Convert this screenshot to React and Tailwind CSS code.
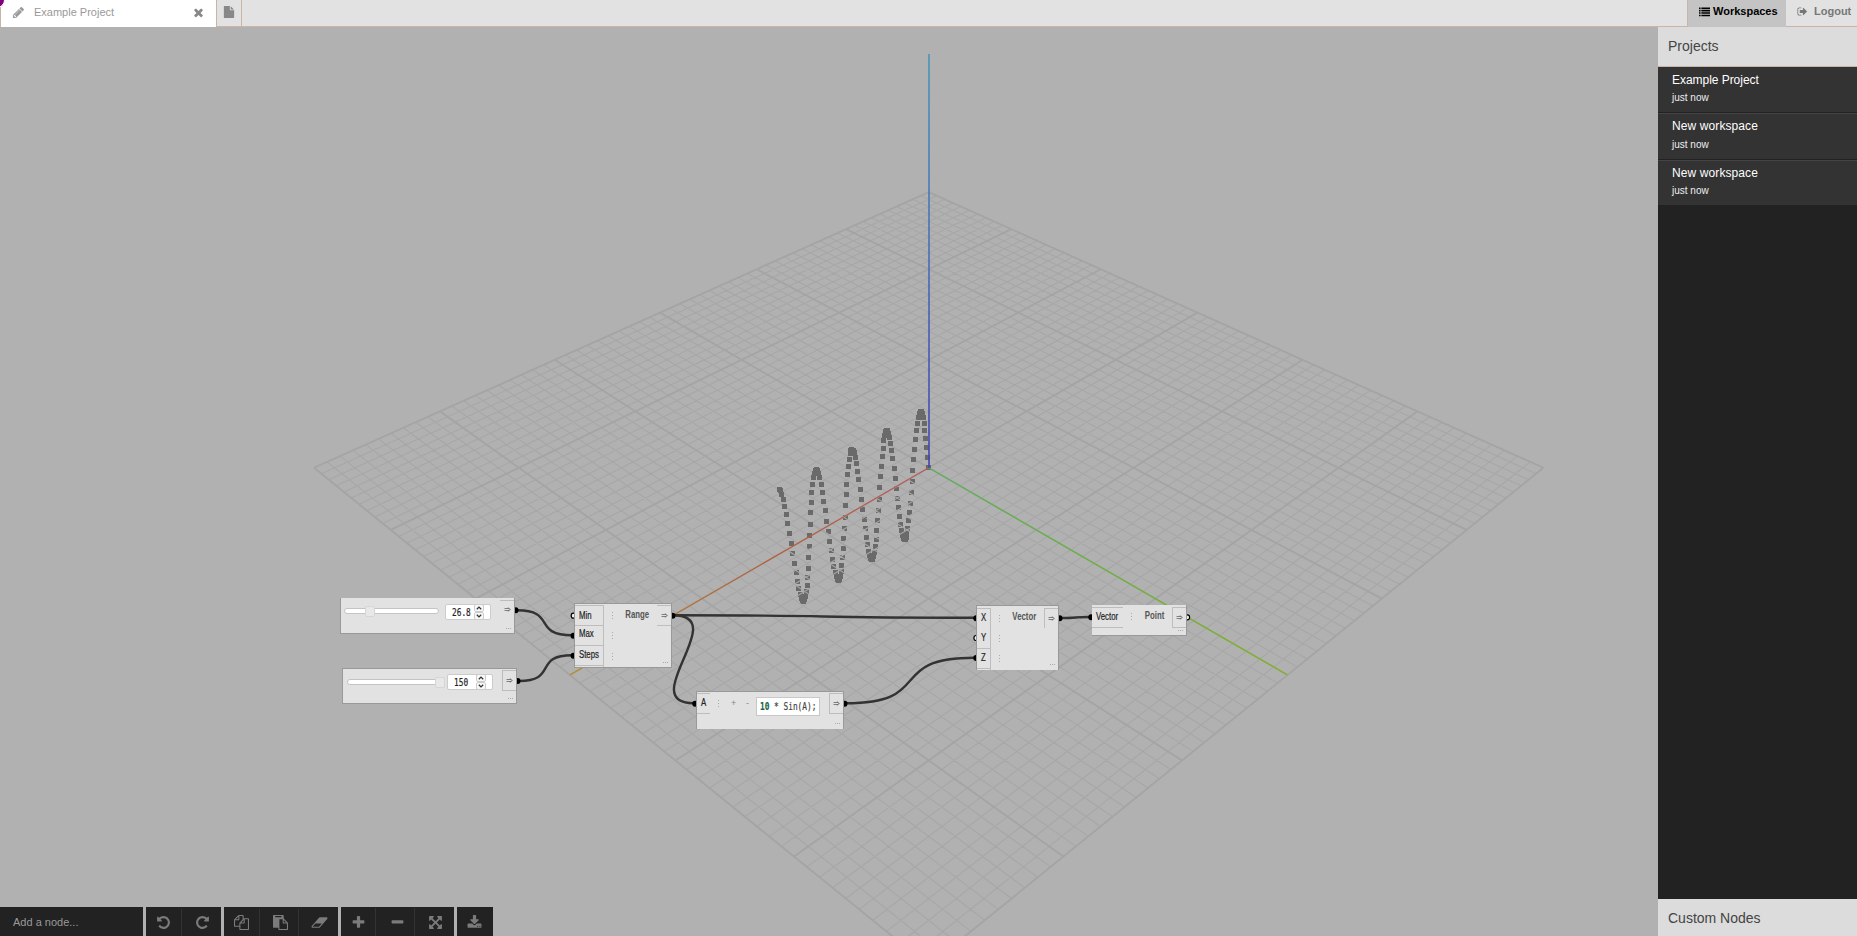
import React from "react";

/* ---------- icons (1792-unit grid) ---------- */
const ICONS = {
  undo: "M1664 896q0 156-61 298t-164 245-245 164-298 61q-172 0-327-72.5t-264-204.5q-7-10-6.5-22.5t8.5-20.5l137-138q10-9 25-9 16 2 23 12 73 95 179 147t225 52q104 0 198.5-40.5t163.5-109.5 109.5-163.5 40.5-198.5-40.5-198.5-109.5-163.5-163.5-109.5-198.5-40.5q-98 0-188 35.5t-160 101.5l137 138q31 30 14 69-17 40-59 40h-448q-26 0-45-19t-19-45v-448q0-42 40-59 39-17 69 14l130 129q107-101 244.5-156.5t284.5-55.5q156 0 298 61t245 164 164 245 61 298z",
  redo: "M1664 256v448q0 26-19 45t-45 19h-448q-42 0-59-40-17-39 14-69l138-138q-148-137-349-137-104 0-198.5 40.5t-163.5 109.5-109.5 163.5-40.5 198.5 40.5 198.5 109.5 163.5 163.5 109.5 198.5 40.5q119 0 225-52t179-147q7-10 23-12 15 0 25 9l137 138q9 8 9.5 20.5t-7.5 22.5q-109 132-264 204.5t-327 72.5q-156 0-298-61t-245-164-164-245-61-298 61-298 164-245 245-164 298-61q147 0 284.5 55.5t244.5 156.5l130-129q29-31 70-14 39 17 39 59z",
  copy: "M1696 384q40 0 68 28t28 68v1216q0 40-28 68t-68 28h-960q-40 0-68-28t-28-68v-288h-544q-40 0-68-28t-28-68v-672q0-40 20-88t48-76l408-408q28-28 76-48t88-20h416q40 0 68 28t28 68v328q68-40 128-40h416zm-544 213l-299 299h299v-299zm-640-384l-299 299h299v-299zm196 647l316-316v-416h-384v416q0 40-28 68t-68 28h-416v640h512v-256q0-40 20-88t48-76zm956 804v-1152h-384v416q0 40-28 68t-68 28h-416v640h896z",
  paste: "M768 1664h896v-640h-416q-40 0-68-28t-28-68v-416h-384v1152zm256-1440v-64q0-13-9.5-22.5t-22.5-9.5h-704q-13 0-22.5 9.5t-9.5 22.5v64q0 13 9.5 22.5t22.5 9.5h704q13 0 22.5-9.5t9.5-22.5zm256 672h299l-299-299v299zm512 128v672q0 40-28 68t-68 28h-960q-40 0-68-28t-28-68v-160h-544q-40 0-68-28t-28-68v-1344q0-40 28-68t68-28h1088q40 0 68 28t28 68v328q21 13 36 28l408 408q28 28 48 76t20 88z",
  eraser: "M960 1408l336-384h-768l-336 384h768zm1013-1077q15 34 9.5 71.5t-30.5 65.5l-896 1024q-38 44-96 44h-768q-38 0-69.5-20.5t-47.5-54.5q-15-34-9.5-71.5t30.5-65.5l896-1024q38-44 96-44h768q38 0 69.5 20.5t47.5 54.5z",
  plus: "M1600 736v192q0 40-28 68t-68 28h-416v416q0 40-28 68t-68 28h-192q-40 0-68-28t-28-68v-416h-416q-40 0-68-28t-28-68v-192q0-40 28-68t68-28h416v-416q0-40 28-68t68-28h192q40 0 68 28t28 68v416h416q40 0 68 28t28 68z",
  minus: "M1600 736v192q0 40-28 68t-68 28h-1216q-40 0-68-28t-28-68v-192q0-40 28-68t68-28h1216q40 0 68 28t28 68z",
  expand: "M1411 541l-355 355 355 355 144-144q29-31 70-14 39 17 39 59v448q0 26-19 45t-45 19h-448q-42 0-59-40-17-39 14-69l144-144-355-355-355 355 144 144q31 30 14 69-17 40-59 40h-448q-26 0-45-19t-19-45v-448q0-42 40-59 39-17 69 14l144 144 355-355-355-355-144 144q-19 19-45 19-12 0-24-5-40-17-40-59v-448q0-26 19-45t45-19h448q42 0 59 40 17 39-14 69l-144 144 355 355 355-355-144-144q-31-30-14-69 17-40 59-40h448q26 0 45 19t19 45v448q0 42-39 59-13 5-25 5-26 0-45-19z",
  download: "M1344 1344q0-26-19-45t-45-19-45 19-19 45 19 45 45 19 45-19 19-45zm256 0q0-26-19-45t-45-19-45 19-19 45 19 45 45 19 45-19 19-45zm128-224v320q0 40-28 68t-68 28h-1472q-40 0-68-28t-28-68v-320q0-40 28-68t68-28h465l135 136q58 56 136 56t136-56l136-136h464q40 0 68 28t28 68zm-325-569q17 41-14 70l-448 448q-18 19-45 19t-45-19l-448-448q-31-29-14-70 17-39 59-39h256v-448q0-26 19-45t45-19h256q26 0 45 19t19 45v448h256q42 0 59 39z",
  pencil: "M491 1536l91-91-235-235-91 91v107h128v128h107zm523-928q0-22-22-22-10 0-17 7l-542 542q-7 7-7 17 0 22 22 22 10 0 17-7l542-542q7-7 7-17zm-54-192l416 416-832 832h-416v-416zm683 96q0 53-37 90l-166 166-416-416 166-165q36-38 90-38 53 0 91 38l235 234q37 39 37 91z",
  times: "M1490 1322q0 40-28 68l-136 136q-28 28-68 28t-68-28l-294-294-294 294q-28 28-68 28t-68-28l-136-136q-28-28-28-68t28-68l294-294-294-294q-28-28-28-68t28-68l136-136q28-28 68-28t68 28l294 294 294-294q28-28 68-28t68 28l136 136q28 28 28 68t-28 68l-294 294 294 294q28 28 28 68z",
  file: "M1152 512v-472q22 14 36 28l408 408q14 14 28 36h-472zm-128 32q0 40 28 68t68 28h544v1056q0 40-28 68t-68 28h-1344q-40 0-68-28t-28-68v-1600q0-40 28-68t68-28h800v544z",
  list: "M0 256h256v256H0zM384 256h1408v256H384zM0 640h256v256H0zM384 640h1408v256H384zM0 1024h256v256H0zM384 1024h1408v256H384zM0 1408h256v256H0zM384 1408h1408v256H384z",
  signout: "M704 1440q0 4 1 20t.5 26.5-3 23.5-10 19.5-20.5 6.5h-320q-119 0-203.5-84.5t-84.5-203.5v-704q0-119 84.5-203.5t203.5-84.5h320q13 0 22.5 9.5t9.5 22.5q0 4 1 20t.5 26.5-3 23.5-10 19.5-20.5 6.5h-320q-66 0-113 47t-47 113v704q0 66 47 113t113 47h312l11.5 1 11.5 3 8 5.5 7 9 2 13.5zm928-544q0 26-19 45l-544 544q-19 19-45 19t-45-19-19-45v-288h-448q-26 0-45-19t-19-45v-384q0-26 19-45t45-19h448v-288q0-26 19-45t45-19 45 19l544 544q19 19 19 45z",
};

function Icon({ name, className, wide = false }) {
  return (
    <svg className={className} viewBox={wide ? "0 0 2048 1792" : "0 0 1792 1792"} fill="currentColor">
      <path d={ICONS[name]} />
    </svg>
  );
}

/* ---------- 3D scene ---------- */
const F = 1748;
const DIST = 241.3;
const SIN = 0.57735;
const COS = 0.8165;

function project(x, y, z) {
  const u = (x + y) / Math.SQRT2;
  const r = (y - x) / Math.SQRT2;
  const depth = DIST - u * COS - z * SIN;
  return [928.7 + (F * r) / depth, 467.8 - (F * (z * COS - u * SIN)) / depth];
}

function segment(a, b) {
  const p = project(...a);
  const q = project(...b);
  return `M${p[0].toFixed(2)} ${p[1].toFixed(2)}L${q[0].toFixed(2)} ${q[1].toFixed(2)}`;
}

let minor = "";
let major = "";
for (let i = -60; i <= 60; i += 2) {
  const d = segment([i, -60, 0], [i, 60, 0]) + segment([-60, i, 0], [60, i, 0]);
  if (i % 20 === 0) major += d;
  else minor += d;
}

const points = Array.from({ length: 150 }, (_, i) => {
  const x = (26.8 * i) / 150;
  const z = 10 * Math.sin(x);
  const [px, py] = project(x, 0, z);
  return { px, py, behind: z < 0 && z > -9.3 };
});

function Points({ list }) {
  return list.map((p) => (
    <rect key={p.px} x={Math.round(p.px - 2.5)} y={Math.round(p.py - 2.5)} width="5" height="5" fill="#6a6a6a" />
  ));
}

function Scene() {
  return (
    <svg className="absolute inset-0" width="1857" height="936" viewBox="0 0 1857 936" fill="none">
      <defs>
        <linearGradient id="ax" gradientUnits="userSpaceOnUse" x1="928" y1="468" x2="570" y2="675">
          <stop offset="0" stopColor="#b85a5a" />
          <stop offset="0.5" stopColor="#b46034" />
          <stop offset="1" stopColor="#c08a1c" />
        </linearGradient>
        <linearGradient id="ay" gradientUnits="userSpaceOnUse" x1="928" y1="468" x2="1288" y2="675">
          <stop offset="0" stopColor="#57b057" />
          <stop offset="1" stopColor="#7fb31a" />
        </linearGradient>
        <linearGradient id="az" gradientUnits="userSpaceOnUse" x1="0" y1="468" x2="0" y2="54">
          <stop offset="0" stopColor="#4343b4" />
          <stop offset="1" stopColor="#4a94b8" />
        </linearGradient>
      </defs>
      <Points list={points.filter((p) => p.behind)} />
      <path d={minor} stroke="#a7a7a7" strokeWidth="1.1" />
      <path d={major} stroke="#a4a4a4" strokeWidth="1.8" />
      <Points list={points.filter((p) => !p.behind)} />
      <path d={segment([0, 0, 0], [60, 0, 0])} stroke="url(#ax)" strokeWidth="1.2" />
      <path d={segment([0, 0, 0], [0, 60, 0])} stroke="url(#ay)" strokeWidth="1.3" />
      <path d="M929 54V468" stroke="url(#az)" strokeWidth="1.6" />
    </svg>
  );
}

/* ---------- wires and sockets ---------- */
function wire(x1, y1, x2, y2) {
  const d = Math.hypot(x2 - x1, y2 - y1) * 0.66;
  return `M${x1} ${y1}C${x1 + d} ${y1} ${x2 - d} ${y2} ${x2} ${y2}`;
}

const WIRES = [
  wire(517, 610.3, 572, 635.3),
  wire(519, 681, 572, 655.3),
  wire(673, 615.3, 974.5, 617.7),
  wire(673, 615.3, 694, 703.3),
  wire(846, 703.3, 974.5, 657.7),
  wire(1061, 618, 1090, 617),
];

const SOCKETS = [
  [515.8, 610.3, 1], [517.8, 681, 1],
  [573.3, 615.7, 0], [573.3, 635.7, 1], [573.3, 655.7, 1], [672.8, 615.7, 1],
  [695, 703.7, 1], [844.8, 703.7, 1],
  [976, 618.3, 1], [976, 638, 0], [976, 658, 1], [1059.8, 618.3, 1],
  [1091, 617.3, 1], [1187.5, 617.3, 0],
];

function Wires() {
  return (
    <svg className="absolute inset-0" width="1857" height="936" viewBox="0 0 1857 936" fill="none">
      {WIRES.map((d) => (
        <path key={d} d={d} stroke="#333" strokeWidth="2.4" />
      ))}
      {SOCKETS.map(([x, y, on]) => (
        <ellipse key={`${x}-${y}`} cx={x} cy={y} rx={on ? 2.7 : 2.1} ry={on ? 3 : 2.5} fill={on ? "#000" : "#eee"} stroke="#000" strokeWidth={on ? 0 : 1.2} />
      ))}
    </svg>
  );
}

/* ---------- nodes ---------- */
function Narrow({ children, className = "" }) {
  return <span className={`inline-block scale-x-[0.78] whitespace-nowrap text-[10px] leading-none ${className}`}>{children}</span>;
}

function Title({ children, className = "" }) {
  return (
    <div className={`flex flex-1 items-start justify-center ${className}`}>
      <Narrow className="font-bold text-[#555]">{children}</Narrow>
    </div>
  );
}

function Grip({ className = "right-[3px] bottom-[4px]" }) {
  return (
    <span className={`absolute flex gap-px ${className}`}>
      <i className="size-px bg-[#aaa]" />
      <i className="size-px bg-[#aaa]" />
      <i className="size-px bg-[#aaa]" />
    </span>
  );
}

function Dots() {
  return (
    <span className="flex w-[17px] flex-col items-center gap-[2px]">
      <i className="size-px bg-[#aaa]" />
      <i className="size-px bg-[#aaa]" />
      <i className="size-px bg-[#aaa]" />
    </span>
  );
}

function Arrow({ className }) {
  return (
    <span className={`flex h-[20px] w-[14px] shrink-0 items-center justify-center border-[#bdbdbd] ${className}`}>
      <svg width="7" height="5" viewBox="0 0 7 5" fill="none" stroke="#555" strokeWidth="0.7">
        <path d="M0.5 1.5H5M0.5 3.5H5M4.2 0.4Q4.9 2 6.4 2.5Q4.9 3 4.2 4.6" />
      </svg>
    </span>
  );
}

function Port({ label, className }) {
  return (
    <div className={`flex h-[20px] items-center border-[#bdbdbd] text-[#222] ${className}`}>
      <Narrow className="origin-left [-webkit-text-stroke:0.2px_#222]">{label}</Narrow>
    </div>
  );
}

function Mono({ children, className = "" }) {
  return (
    <span className={`inline-block origin-left scale-x-[0.71] whitespace-pre font-['DejaVu_Sans_Mono',monospace] text-[11px] leading-none [-webkit-text-stroke:0.2px] ${className}`}>
      {children}
    </span>
  );
}

function Chevron({ down = false }) {
  return (
    <span className="flex h-[8px] w-[10px] items-center justify-center rounded-[2px] border border-[#ccc] bg-[#f8f8f8]">
      <svg width="6" height="4" viewBox="0 0 6 4" fill="none" stroke="#333" strokeWidth="1.3">
        <path d={down ? "M0.8 0.7L3 2.9L5.2 0.7" : "M0.8 3.3L3 1.1L5.2 3.3"} />
      </svg>
    </span>
  );
}

function SliderNode({ value, frame, track, handle, field, port, grip }) {
  return (
    <div className={`absolute flex border-[#999] bg-[#e2e2e2] ${frame}`}>
      <div className={`relative h-[6px] rounded-[3px] border border-[#c4c4c4] bg-white ${track}`}>
        <span className={`absolute -top-[3px] h-[11px] w-[10px] rounded-[2px] border border-[#d6d6d6] bg-[#e8e8e8] ${handle}`} />
      </div>
      <div className={`flex h-[16px] w-[46px] items-center rounded-[2px] border border-[#ccc] bg-white ${field}`}>
        <div className="flex w-[28px] justify-start pl-[6px]">
          <Mono className="w-[27px] text-[#222]">{value}</Mono>
        </div>
        <div className="flex flex-col">
          <Chevron />
          <Chevron down />
        </div>
      </div>
      <Arrow className={port} />
      <Grip className={grip} />
    </div>
  );
}

function Nodes() {
  return (
    <div className="absolute inset-0 text-[#333]">
      <SliderNode
        value="26.8"
        frame="left-[340px] top-[598px] h-[36px] w-[175px] border-x border-b"
        track="mt-[10px] ml-[3px] w-[95px]"
        handle="left-[20px]"
        field="mt-[6px] ml-[6px]"
        port="mt-[2px] ml-[9px] border-t pb-[3px]"
      />
      <SliderNode
        value="150"
        frame="left-[342px] top-[668px] h-[36px] w-[175px] border"
        track="mt-[10px] ml-[4px] w-[94px]"
        handle="left-[87px]"
        field="mt-[5px] ml-[6px]"
        port="mt-[1px] ml-[9px] h-[21px]! border-y border-l"
      />

      <div className="absolute top-[603px] left-[574px] flex h-[65px] w-[98px] border border-[#999] bg-[#e2e2e2]">
        <div className="mt-[1px] w-[29px] border-r border-[#bdbdbd]">
          <Port label="Min" className="border-t pl-[4px]" />
          <Port label="Max" className="border-t pb-[3px] pl-[4px]" />
          <Port label="Steps" className="h-[21px]! border-y pb-[2px] pl-[4px]" />
        </div>
        <div className="mt-[1px] grid grid-rows-3 items-center">
          <Dots />
          <Dots />
          <Dots />
        </div>
        <Title className="pt-[6px] pr-[4px]">Range</Title>
        <Arrow className="mt-[1px] h-[21px]! border-y" />
        <Grip />
      </div>

      <div className="absolute top-[691px] left-[696px] flex h-[38px] w-[148px] border-x border-t border-[#999] bg-[#e2e2e2]">
        <Port label="A" className="mt-[1px] h-[21px]! w-[13px] border-y pb-[2px] pl-[4px]" />
        <div className="mt-[8px]">
          <Dots />
        </div>
        <div className="mt-[7px] ml-[4px] flex w-[18px] justify-between text-[9px] leading-none text-[#888]">
          <span>+</span>
          <span>-</span>
        </div>
        <div className="mt-[5px] ml-[7px] flex h-[19px] w-[64px] items-center border border-[#c8c8c8] bg-white pl-[3px]">
          <Mono className="w-[58px] text-[#444]">
            <b className="text-[#116644]">10</b> * Sin(A);
          </Mono>
        </div>
        <Arrow className="mt-[1px] ml-auto h-[21px]! border-y border-l pb-[1px]" />
        <Grip className="right-[3px] bottom-[5px]" />
      </div>

      <div className="absolute top-[605px] left-[976px] flex h-[65px] w-[83px] border-x border-t border-[#999] bg-[#e2e2e2]">
        <div className="mt-[2px] w-[14px] border-r border-[#bdbdbd]">
          <Port label="X" className="border-t pb-[1px] pl-[4px]" />
          <Port label="Y" className="pb-[1px] pl-[4px]" />
          <Port label="Z" className="h-[21px]! border-y pb-[1px] pl-[4px]" />
        </div>
        <div className="mt-[2px] mb-[2px] grid grid-rows-3 items-center">
          <Dots />
          <Dots />
          <Dots />
        </div>
        <Title className="pt-[6px] pr-[4px]">Vector</Title>
        <Arrow className="mt-[2px] border-t border-l pb-[1px]" />
        <Grip className="right-[3px] bottom-[5px]" />
      </div>

      <div className="absolute top-[605px] left-[1092px] flex h-[31px] w-[95px] border-r border-b border-[#999] bg-[#e2e2e2]">
        <Port label="Vector" className="mt-[2px] h-[21px]! w-[31px] border-y pb-[2px] pl-[4px]" />
        <div className="mt-[8px]">
          <Dots />
        </div>
        <Title className="pt-[6px] pr-[4px]">Point</Title>
        <Arrow className="mt-[2px] h-[21px]! border-y border-l pb-[1px]" />
        <Grip />
      </div>
    </div>
  );
}

/* ---------- chrome ---------- */
function TopBar() {
  return (
    <header className="relative flex h-[27px] shrink-0 bg-[#e2e2e2] text-[11px] leading-none">
      <div className="flex h-[27px] w-[216px] items-center border-l border-[#c9b4a6] bg-white pr-[11px] pb-[3px] pl-[11px] text-[#999]">
        <Icon name="pencil" className="size-[13px]" />
        <span className="ml-[9px] flex-1">Example Project</span>
        <Icon name="times" className="size-[13px] text-[#888]" />
      </div>
      <div className="flex w-[26px] items-center justify-center border-x border-b border-[#c9b4a6] pr-[1px] pb-[2px] text-[#888]">
        <Icon name="file" className="size-[12px]" />
      </div>
      <div className="flex-1 border-b border-[#c9b4a6]" />
      <div className="flex w-[99px] items-center border-l border-[#c9b4a6] bg-[#c4c4c4] pb-[4px] pl-[11px] font-bold text-black">
        <Icon name="list" className="size-[11px]" />
        <span className="ml-[3px]">Workspaces</span>
      </div>
      <div className="flex w-[71px] items-center border-b border-[#c9b4a6] pb-[3px] pl-[11px] font-bold text-[#777]">
        <Icon name="signout" className="size-[11px]" />
        <span className="ml-[6px]">Logout</span>
      </div>
      <span className="absolute -top-[8px] -left-[11px] size-[16px] rounded-full border border-white bg-[#800080]" />
    </header>
  );
}

function Project({ name, className, nameClass = "", timeClass }) {
  return (
    <li className={`flex flex-col bg-[#333] pl-[14px] ${className}`}>
      <span className={`text-[12px] leading-[14px] text-white ${nameClass}`}>{name}</span>
      <span className={`text-[10px] leading-[12px] text-[#eee] ${timeClass}`}>just now</span>
    </li>
  );
}

function Sidebar() {
  return (
    <aside className="flex w-[199px] flex-col bg-[#222]">
      <h2 className="flex h-[40px] items-center border-b border-[#c9b4a6] bg-[#dcdcdc] pb-[1px] pl-[10px] text-[14px] text-[#444]">Projects</h2>
      <ul className="flex-1">
        <Project name="Example Project" nameClass="tracking-[-0.04px]" className="h-[46px] border-b border-b-[#222] pt-[6px]" timeClass="mt-[5px]" />
        <Project name="New workspace" nameClass="tracking-[0.1px]" className="h-[47px] border-t border-b border-t-[#444] border-b-[#222] pt-[5px]" timeClass="mt-[6px]" />
        <Project name="New workspace" nameClass="tracking-[0.1px]" className="h-[45px] border-t border-t-[#444] pt-[5px]" timeClass="mt-[5px]" />
      </ul>
      <h2 className="flex h-[37px] items-center bg-[#dcdcdc] pt-[2px] pl-[10px] text-[14px] text-[#444]">Custom Nodes</h2>
    </aside>
  );
}

const TOOL = "flex h-full items-center justify-center";

function Toolbar() {
  return (
    <div className="flex h-[29px] gap-[3px] self-end text-[#7b7b7b]">
      <div className="flex w-[143px] items-center bg-[#222] pt-[2px] pl-[13px] text-[11px] text-[#999]">Add a node...</div>
      <div className="flex w-[75px] divide-x divide-[#333] bg-[#222] pt-[2px]">
        <div className={`${TOOL} w-[36px]`}><Icon name="undo" className="size-[15px]" /></div>
        <div className={`${TOOL} flex-1 pl-[2px]`}><Icon name="redo" className="size-[15px]" /></div>
      </div>
      <div className="flex w-[114px] divide-x divide-[#333] bg-[#222] pt-[2px]">
        <div className={`${TOOL} w-[36px]`}><Icon name="copy" className="size-[15px]" /></div>
        <div className={`${TOOL} w-[39px] pl-[2px]`}><Icon name="paste" className="size-[15px]" /></div>
        <div className={`${TOOL} flex-1 pl-[2px]`}><Icon name="eraser" wide className="h-[15px] w-[17px]" /></div>
      </div>
      <div className="flex w-[113px] divide-x divide-[#333] bg-[#222] pt-[1px]">
        <div className={`${TOOL} w-[35px]`}><Icon name="plus" className="size-[15px]" /></div>
        <div className={`${TOOL} w-[39px] pl-[4px]`}><Icon name="minus" className="size-[15px]" /></div>
        <div className={`${TOOL} flex-1 pt-[1px] pl-[2px]`}><Icon name="expand" className="size-[15px]" /></div>
      </div>
      <div className="flex w-[36px] bg-[#222] pt-[1px]">
        <div className={`${TOOL} flex-1 pr-[1px]`}><Icon name="download" className="size-[15px]" /></div>
      </div>
    </div>
  );
}

export default function App() {
  return (
    <div className="relative flex h-[936px] w-[1857px] flex-col overflow-hidden bg-[#b1b1b1] font-['Liberation_Sans',Arial,sans-serif]">
      <Scene />
      <Wires />
      <Nodes />
      <TopBar />
      <div className="relative flex min-h-0 flex-1 justify-between">
        <Toolbar />
        <Sidebar />
      </div>
    </div>
  );
}
